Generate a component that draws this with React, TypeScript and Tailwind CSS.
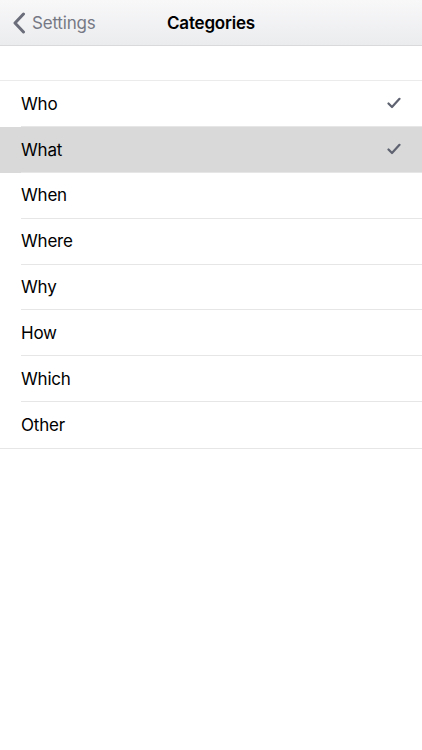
import React from "react";

const items = ["Who", "What", "When", "Where", "Why", "How", "Which", "Other"];
const checked = new Set(["Who", "What"]);

function Check() {
  return (
    <svg width="14" height="12" viewBox="0 0 14 12" fill="none">
      <path d="M1.5 6.5 L5 10 L12.5 1.8" stroke="#5f6270" strokeWidth="2.2" strokeLinecap="round" strokeLinejoin="round" />
    </svg>
  );
}

export default function App() {
  return (
    <div className="w-[422px] h-[750px] bg-white" style={{ fontFamily: "Inter, 'Liberation Sans', sans-serif" }}>
      <div className="relative h-[46px] bg-gradient-to-b from-[#f8f8f9] to-[#ebecee] border-b border-[#d9d9dc] flex items-center pt-[1px]">
        <div className="flex items-center pl-[12px] gap-[6px]">
          <svg width="14" height="22" viewBox="0 0 14 22" fill="none">
            <path d="M11.5 2 L3 11 L11.5 20" stroke="#6b6e7a" strokeWidth="3" strokeLinecap="round" strokeLinejoin="round" />
          </svg>
          <span className="text-[17px] text-[#767985] tracking-[-0.2px] pt-[2px]">Settings</span>
        </div>
        <div className="absolute inset-0 pt-[3px] flex items-center justify-center pointer-events-none">
          <span className="text-[17px] font-semibold text-black tracking-[-0.2px]">Categories</span>
        </div>
      </div>
      <div className="h-[35px] border-b border-[#ebebeb]" />
      <div>
        {items.map((it, i) => {
          const sel = it === "What";
          const last = i === items.length - 1;
          return (
            <div key={it} className={`${sel ? "bg-[#d9d9d9]" : "bg-white"} ${last ? "border-b border-[#e6e6e6]" : ""}`}>
              <div className={`h-[45.875px] flex items-center pr-[21px] ml-[21px] ${!last ? "border-b border-[#e6e6e6]" : ""} ${sel ? "border-[#d9d9d9]" : ""}`}>
                <span className="flex-1 text-[17px] text-black tracking-[-0.2px] pt-[2px]">{it}</span>
                {checked.has(it) && <Check />}
              </div>
            </div>
          );
        })}
      </div>
    </div>
  );
}
